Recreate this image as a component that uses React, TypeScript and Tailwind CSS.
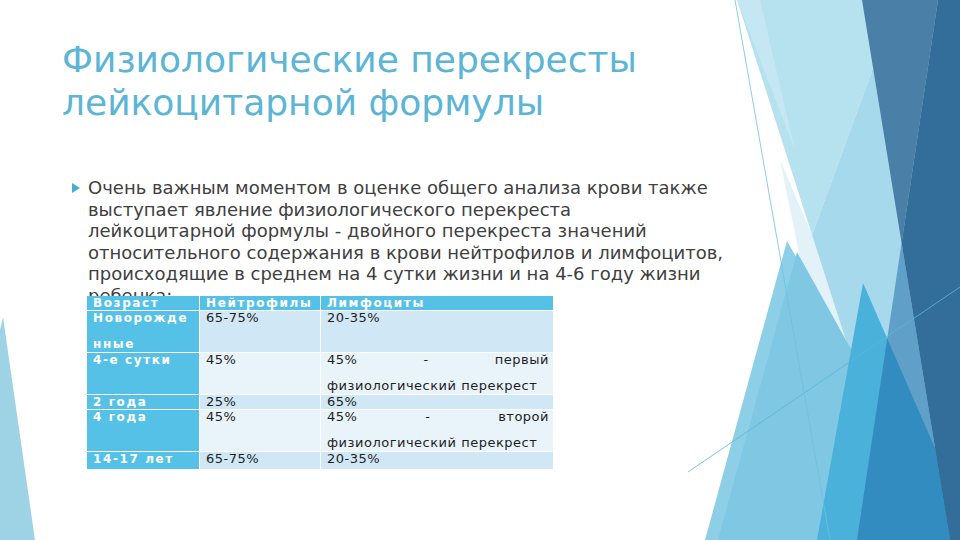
import React from 'react';

const rows = [
  { age: ['Новорожде', 'нные'], n: '65-75%', l: '20-35%', tone: 'dark' },
  { age: ['4-е сутки'], n: '45%', l: '45% - первый физиологический перекрест', tone: 'light' },
  { age: ['2 года'], n: '25%', l: '65%', tone: 'dark' },
  { age: ['4 года'], n: '45%', l: '45% - второй физиологический перекрест', tone: 'light' },
  { age: ['14-17 лет'], n: '65-75%', l: '20-35%', tone: 'dark' },
];

const bodyLines = [
  'Очень важным моментом в оценке общего анализа крови также',
  'выступает явление физиологического перекреста',
  'лейкоцитарной формулы - двойного перекреста значений',
  'относительного содержания в крови нейтрофилов и лимфоцитов,',
  'происходящие в среднем на 4 сутки жизни и на 4-6 году жизни',
  'ребенка:',
];

export default function App() {
  return (
    <div className="relative w-[960px] h-[540px] overflow-hidden bg-white font-['DejaVu_Sans',sans-serif]">
      {/* фоновые треугольники */}
      <Decoration />

      <div className="relative z-10 pl-[62px] pt-[38px]">
        <h1 className="text-[36px] leading-[43px] text-[#5db5d5] font-normal">
          Физиологические перекресты
          <br />
          лейкоцитарной формулы
        </h1>

        <div className="mt-[53px] flex">
          <div className="w-[26px] pt-[6px] pl-[10px]">
            <svg width="8" height="10" viewBox="0 0 8 10">
              <polygon points="0,0 8,5 0,10" fill="#45acd8" />
            </svg>
          </div>
          <div className="text-[18px] leading-[21.6px] text-[#404040]">
            {bodyLines.map((line, i) => (
              <div key={i} className="whitespace-nowrap">{line}</div>
            ))}
          </div>
        </div>

        {/* таблица перекрывает последнюю строку, как на слайде */}
        <div className="relative z-20 -mt-[11px] ml-[25px] w-[466px] grid grid-cols-[112px_120px_232px] grid-rows-[14px_41px_41px_14px_41px_17px] gap-px bg-white text-[12px] leading-[26px]">
          <HeadCell>Возраст</HeadCell>
          <HeadCell>Нейтрофилы</HeadCell>
          <HeadCell>Лимфоциты</HeadCell>
          {rows.map((r, i) => (
            <React.Fragment key={i}>
              <div className="bg-[#56c1e7] pl-[6px]">
                <div className="-mt-[6px] font-bold text-white tracking-[1.6px]">
                  {r.age.map((a, j) => (
                    <div key={j}>{a}</div>
                  ))}
                </div>
              </div>
              <Cell tone={r.tone}>{r.n}</Cell>
              <Cell tone={r.tone} justify>{r.l}</Cell>
            </React.Fragment>
          ))}
        </div>
      </div>
    </div>
  );
}

function HeadCell({ children }: { children: React.ReactNode }) {
  return (
    <div className="bg-[#56c1e7] pl-[6px]">
      <div className="-mt-[6px] font-bold text-white tracking-[1.6px] whitespace-nowrap">{children}</div>
    </div>
  );
}

function Cell({ children, tone, justify = false }: { children: React.ReactNode; tone: string; justify?: boolean }) {
  return (
    <div className={`${tone === 'dark' ? 'bg-[#d0e8f5]' : 'bg-[#e8f3fa]'} pl-[6px] pr-[4px]`}>
      <div className={`-mt-[6px] text-[13px] text-[#1e1e1e] tracking-[0.5px] ${justify ? 'text-justify' : ''}`}>{children}</div>
    </div>
  );
}

function Decoration() {
  return (
    <svg className="absolute inset-0 pointer-events-none" width="960" height="540" viewBox="0 0 960 540">
      <polygon points="0,330 3,317 35,540 0,540" fill="#9dd3e5" />
      <polygon points="780,160 812,235 900,510 800,258" fill="#e2f2f8" />
      <polygon points="737,0 898,0 812,235" fill="#b6e1ef" />
      <polygon points="737,0 760,0 795,150" fill="#c4e7f3" />
      <polygon points="898,0 960,0 960,540 910,540 812,235" fill="#a7d9ec" />
      <polygon points="787,241 705,540 960,545" fill="#8ccfe7" />
      <polygon points="797,252 718,540 960,545" fill="#7fc7e3" />
      <polygon points="863,283 817,540 975,540" fill="#4ab1da" />
      <polygon points="901.6,243 950,540 857,540" fill="#1a68a3" fillOpacity="0.5" />
      <polygon points="862,0 938,0 901.6,243" fill="#4a7fa7" />
      <polygon points="938,0 960,0 960,540 950,540 901.6,243" fill="#336d99" />
      <line x1="735" y1="0" x2="830" y2="540" stroke="#6fc0de" strokeWidth="0.8" />
      <line x1="688" y1="472" x2="960" y2="287" stroke="#5ab6dc" strokeWidth="0.8" />
    </svg>
  );
}
